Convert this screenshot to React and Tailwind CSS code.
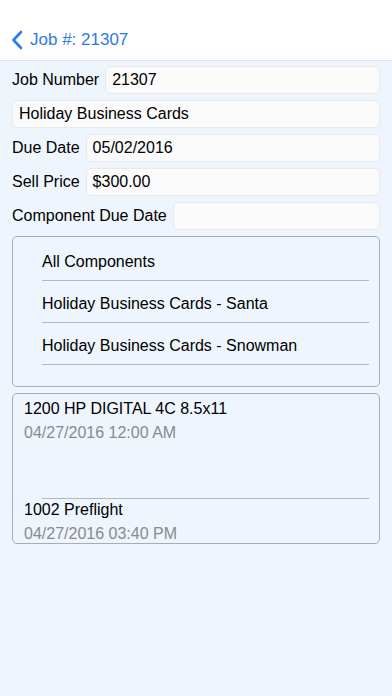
import React from 'react';

const fields = [
  { label: 'Job Number', value: '21307' },
  { label: null, value: 'Holiday Business Cards' },
  { label: 'Due Date', value: '05/02/2016' },
  { label: 'Sell Price', value: '$300.00' },
  { label: 'Component Due Date', value: '' },
];

const components = [
  'All Components',
  'Holiday Business Cards - Santa',
  'Holiday Business Cards - Snowman',
];

const tasks = [
  { name: '1200 HP DIGITAL 4C 8.5x11', date: '04/27/2016 12:00 AM' },
  { name: '1002 Preflight', date: '04/27/2016 03:40 PM' },
];

export default function App() {
  return (
    <div
      className="w-[392px] h-[696px] bg-[#eef5fd] text-black overflow-hidden"
      style={{ fontFamily: '"Liberation Sans", Arial, sans-serif' }}
    >
      {/* Nav bar */}
      <div className="h-[61px] bg-white border-b border-[#dfe3e8] flex items-end">
        <div className="h-[41px] flex items-center pl-[11px] text-[#2b7be6] text-[17px]">
          <svg width="12" height="20" viewBox="0 0 12 20" fill="none" className="mr-[7px] mt-[1px]">
            <path d="M10 2L2.5 10L10 18" stroke="currentColor" strokeWidth="2.6" strokeLinecap="round" strokeLinejoin="round" />
          </svg>
          <span>Job #: 21307</span>
        </div>
      </div>

      <div className="px-[12px] pt-[5px] flex flex-col">
        {/* Fields */}
        <div className="flex flex-col gap-[6px]">
          {fields.map((f, i) => (
            <div key={i} className="flex items-center h-[28px] text-[16px]">
              {f.label && <span className="mr-[6px] whitespace-nowrap">{f.label}</span>}
              <div className="flex-1 h-full bg-[#fafafb] border border-[#e6eaef] rounded-[5px] flex items-center px-[6px]">
                {f.value}
              </div>
            </div>
          ))}
        </div>

        {/* Components list */}
        <div className="mt-[6px] h-[151px] border border-[#a9adb3] rounded-[5px] pt-[2px]">
          {components.map((c) => (
            <div key={c} className="ml-[29px] mr-[10px] h-[42px] pt-[4px] flex items-center border-b border-[#b4b8bd] text-[16px]">
              {c}
            </div>
          ))}
        </div>

        {/* Tasks list */}
        <div className="mt-[6px] h-[151px] border border-[#a9adb3] rounded-[5px] overflow-hidden">
          <div className="h-[105px] px-[11px] pt-[4px] relative">
            <div className="text-[16px] leading-[22px]">{tasks[0].name}</div>
            <div className="text-[16px] leading-[22px] mt-[2px] text-[#8a8a8e]">{tasks[0].date}</div>
            <div className="absolute left-[29px] right-[10px] bottom-0 border-b border-[#b4b8bd]"></div>
          </div>
          <div className="px-[11px]">
            <div className="text-[16px] leading-[22px]">{tasks[1].name}</div>
            <div className="text-[16px] leading-[22px] mt-[2px] text-[#8a8a8e]">{tasks[1].date}</div>
          </div>
        </div>
      </div>
    </div>
  );
}
